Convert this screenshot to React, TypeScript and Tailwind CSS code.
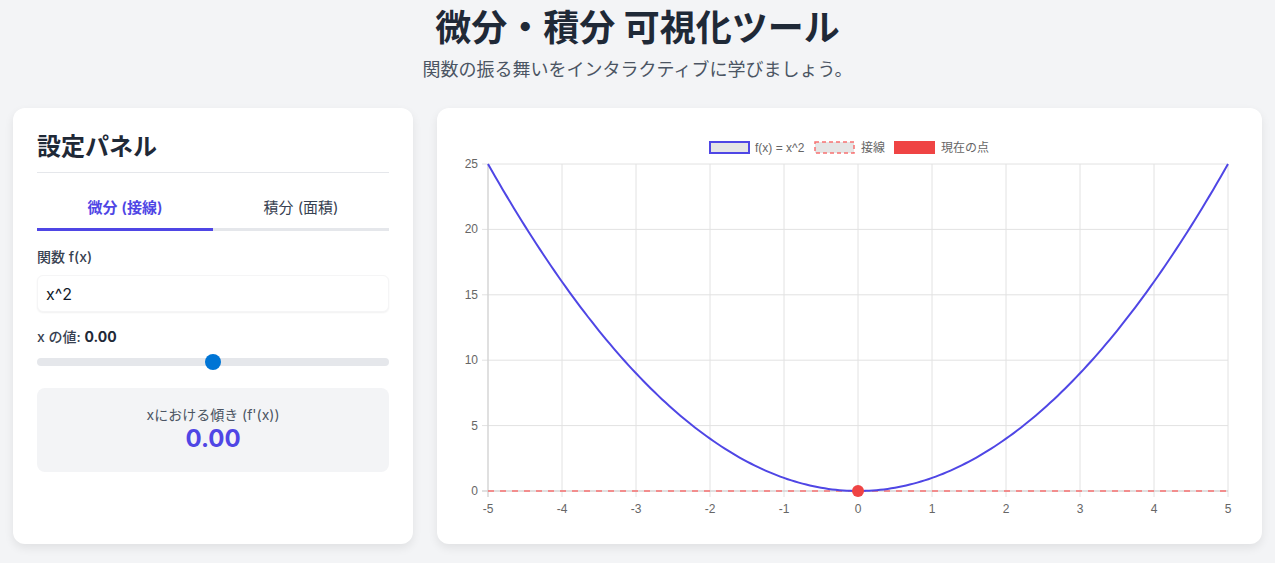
import React from 'react';

const JP = "font-['Inter','Noto_Sans_CJK_JP',sans-serif]";

// Chart geometry (SVG units = px)
const W = 776;
const H = 388;
const X0 = 27;
const X1 = 767;
const YT = 32;
const YB = 359;
const sx = (x: number) => X0 + ((x + 5) / 10) * (X1 - X0);
const sy = (y: number) => YB - (y / 25) * (YB - YT);

const curve = (() => {
  const pts: string[] = [];
  for (let i = 0; i <= 200; i++) {
    const x = -5 + (i / 200) * 10;
    pts.push(`${sx(x).toFixed(2)},${sy(x * x).toFixed(2)}`);
  }
  return 'M' + pts.join(' L');
})();

const FunctionChart = () => {
  const xs = [-5, -4, -3, -2, -1, 0, 1, 2, 3, 4, 5];
  const ys = [0, 5, 10, 15, 20, 25];
  return (
    <svg width={W} height={H} viewBox={`0 0 ${W} ${H}`} className="block">
      {/* legend */}
      <g fontFamily="'Liberation Sans','Noto Sans CJK JP',sans-serif" fontSize="12" fill="#666">
        <rect x="249" y="10" width="39" height="11" fill="#e5e5e5" stroke="#4f46e5" strokeWidth="2" />
        <text x="294" y="19.5">f(x) = x^2</text>
        <rect x="354" y="10" width="39" height="11" fill="#e5e5e5" stroke="#f87171" strokeWidth="1.5" strokeDasharray="4 3" />
        <text x="400" y="19.5">接線</text>
        <rect x="433" y="9" width="41" height="13" fill="#ef4444" />
        <text x="480" y="19.5">現在の点</text>
      </g>

      {/* grid */}
      {xs.map((x) => (
        <line key={`gx${x}`} x1={sx(x)} x2={sx(x)} y1={YT} y2={YB + 6} stroke="#e2e2e2" strokeWidth="1" />
      ))}
      {ys.map((y) => (
        <line key={`gy${y}`} x1={X0 - 6} x2={X1} y1={sy(y)} y2={sy(y)} stroke="#e2e2e2" strokeWidth="1" />
      ))}
      <line x1={X0} x2={X0} y1={YT} y2={YB + 6} stroke="#cfcfcf" strokeWidth="1" />
      <line x1={X0 - 6} x2={X1} y1={YB} y2={YB} stroke="#cfcfcf" strokeWidth="1" />

      {/* tick labels */}
      <g fontFamily="'Liberation Sans',sans-serif" fontSize="12" fill="#666">
        {ys.map((y) => (
          <text key={`ly${y}`} x={X0 - 10} y={sy(y) + 4} textAnchor="end">
            {y}
          </text>
        ))}
        {xs.map((x) => (
          <text key={`lx${x}`} x={sx(x)} y={YB + 22} textAnchor="middle">
            {x}
          </text>
        ))}
      </g>

      {/* tangent at x = 0 */}
      <line x1={X0} x2={X1} y1={YB} y2={YB} stroke="#f87171" strokeWidth="1.5" strokeDasharray="6 6" />

      {/* f(x) */}
      <path d={curve} fill="none" stroke="#4f46e5" strokeWidth="2" strokeLinejoin="round" />

      {/* current point */}
      <circle cx={sx(0)} cy={sy(0)} r="6" fill="#ef4444" />
    </svg>
  );
};

export default function App() {
  return (
    <div className={`min-h-[563px] bg-[#f3f4f6] ${JP}`}>
      <header className="pt-[6px] text-center">
        <h1 className="text-[36px] leading-[44px] font-bold text-[#1f2937]">微分・積分 可視化ツール</h1>
        <p className="mt-[8px] text-[18px] leading-[24px] text-[#4b5563]">関数の振る舞いをインタラクティブに学びましょう。</p>
      </header>

      <main className="mt-[26px] px-[13px] flex gap-[24px]">
        {/* settings */}
        <section className="w-[400px] h-[436px] shrink-0 bg-white rounded-xl shadow-[0_4px_10px_rgba(0,0,0,0.08)] px-[24px] pt-[24px]">
          <h2 className="text-[24px] leading-[30px] font-bold text-[#1f2937] pb-[10px] border-b border-[#e5e7eb]">設定パネル</h2>

          <div className="mt-[23px] flex">
            <button className="flex-1 pb-[8px] text-[15px] leading-[24px] font-semibold text-[#4f46e5] border-b-[3px] border-[#4f46e5]">
              微分 (接線)
            </button>
            <button className="flex-1 pb-[8px] text-[15px] leading-[24px] font-normal text-[#374151] border-b-[3px] border-[#e5e7eb]">
              積分 (面積)
            </button>
          </div>

          <label className="block mt-[16px] text-[14px] leading-[20px] font-medium text-[#374151]">関数 f(x)</label>
          <div className="mt-[8px] h-[37px] rounded-md bg-white shadow-[0_1px_2px_rgba(0,0,0,0.06)] border border-[#f5f5f6] px-[8px] flex items-center text-[16px] text-[#111827]">
            x^2
          </div>

          <div className="mt-[15px] text-[14px] leading-[20px] font-medium text-[#374151]">
            x の値: <span className="font-bold text-[#1f2937]">0.00</span>
          </div>
          <div className="relative mt-[11px] h-[8px] rounded-full bg-[#e5e7eb]">
            <span className="absolute left-1/2 top-1/2 -translate-x-1/2 -translate-y-1/2 w-[16px] h-[16px] rounded-full bg-[#0075d5]" />
          </div>

          <div className="mt-[22px] h-[84px] rounded-lg bg-[#f3f4f6] flex flex-col items-center justify-center">
            <p className="text-[14px] leading-[18px] text-[#4b5563]">xにおける傾き (f'(x))</p>
            <p className="text-[24px] leading-[30px] font-bold text-[#4f46e5]">0.00</p>
          </div>
        </section>

        {/* chart */}
        <section className="flex-1 h-[436px] bg-white rounded-xl shadow-[0_4px_10px_rgba(0,0,0,0.08)] p-[24px]">
          <FunctionChart />
        </section>
      </main>
    </div>
  );
}
